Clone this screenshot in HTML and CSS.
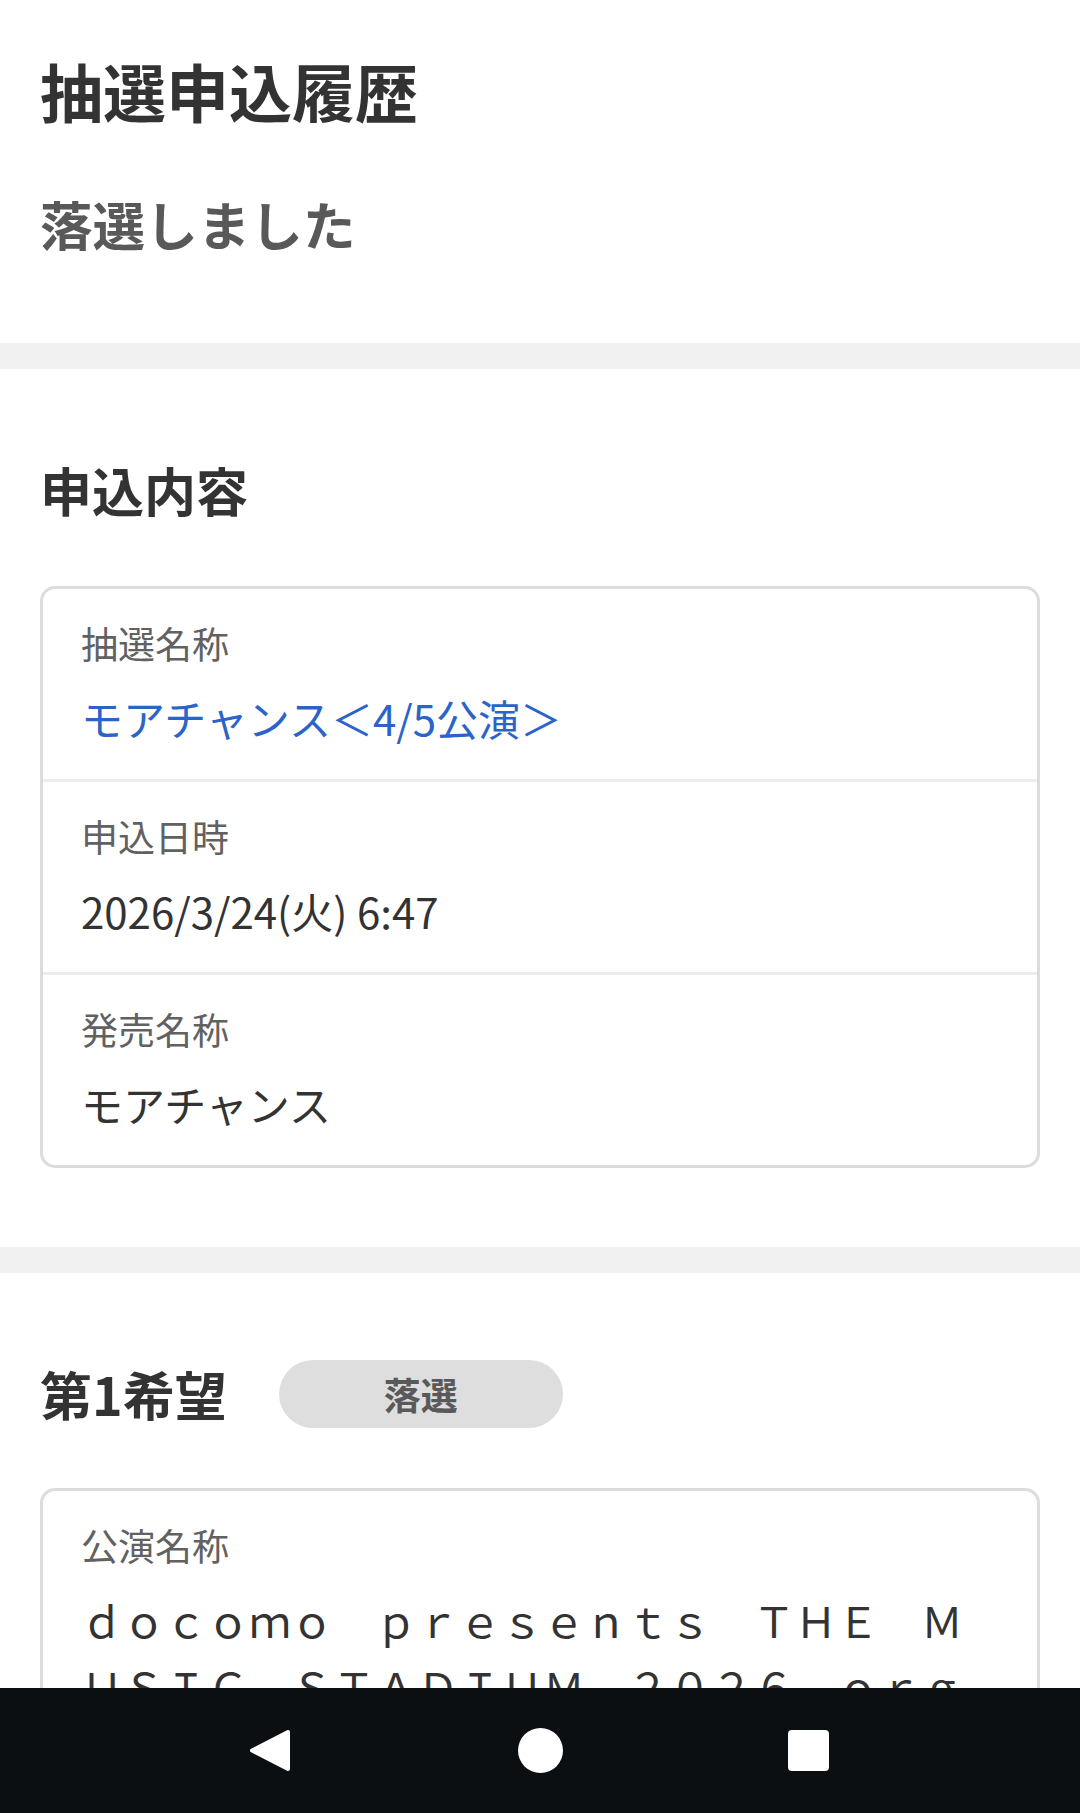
FILE: index.html
```html
<!DOCTYPE html>
<html lang="ja">
<head>
<meta charset="utf-8">
<title>抽選申込履歴</title>
<link rel="stylesheet" href="styles.css">
</head>
<body>
<main class="page">
  <section class="hero">
    <h1 class="title">抽選申込履歴</h1>
    <p class="result">落選しました</p>
  </section>
  <div class="band"></div>
  <section class="block block-apply">
    <h2 class="heading">申込内容</h2>
    <dl class="card">
      <div class="row">
        <dt class="label">抽選名称</dt>
        <dd class="value link">モアチャンス＜4/5公演＞</dd>
      </div>
      <div class="row">
        <dt class="label">申込日時</dt>
        <dd class="value">2026/3/24(火) 6:47</dd>
      </div>
      <div class="row">
        <dt class="label">発売名称</dt>
        <dd class="value">モアチャンス</dd>
      </div>
    </dl>
  </section>
  <div class="band"></div>
  <section class="block block-choice">
    <div class="choice-head">
      <h2 class="heading">第1希望</h2>
      <span class="pill">落選</span>
    </div>
    <dl class="card">
      <div class="row">
        <dt class="label">公演名称</dt>
        <dd class="value">ｄｏｃｏｍｏ　ｐｒｅｓｅｎｔｓ　ＴＨＥ　ＭＵＳＩＣ　ＳＴＡＤＩＵＭ　２０２６　ｏｒｇ</dd>
      </div>
    </dl>
  </section>
</main>
<nav class="sysnav">
  <span class="navbtn">
    <svg width="45" height="45" viewBox="0 0 45 45"><polygon points="2,22.5 38,4 38,41" fill="#fff" stroke="#fff" stroke-width="4" stroke-linejoin="round"/></svg>
  </span>
  <span class="navbtn">
    <svg width="45" height="45" viewBox="0 0 45 45"><circle cx="22.5" cy="22.5" r="22.5" fill="#fff"/></svg>
  </span>
  <span class="navbtn">
    <svg width="45" height="45" viewBox="0 0 45 45"><rect x="2" y="2" width="41" height="41" rx="4" fill="#fff"/></svg>
  </span>
</nav>
</body>
</html>
```

FILE: styles.css
```css
html, body {
  margin: 0;
  padding: 0;
  background: #ffffff;
}

body {
  font-family: "Noto Sans CJK JP", "Noto Sans", sans-serif;
  color: #333333;
}

.page {
  display: flex;
  flex-direction: column;
}

.hero {
  padding: 46px 40px 82px;
}

.title {
  margin: 0;
  font-size: 63px;
  line-height: 88px;
  font-weight: 700;
  color: #333333;
}

.result {
  margin: 51px 0 0;
  font-size: 52.6px;
  line-height: 76px;
  font-weight: 700;
  color: #595959;
}

.band {
  height: 26px;
  background: #f0f0f0;
}

.block {
  padding: 84px 40px 79px;
}

.heading {
  margin: 0;
  font-size: 52px;
  line-height: 74px;
  font-weight: 700;
  color: #333333;
}

.block-apply .heading {
  margin-bottom: 59px;
}

.choice-head {
  display: flex;
  align-items: center;
  gap: 52px;
  margin-bottom: 57px;
}

.pill {
  display: flex;
  align-items: center;
  justify-content: center;
  width: 284px;
  height: 68px;
  border-radius: 34px;
  background: #dedede;
  color: #595959;
  font-size: 37px;
  font-weight: 700;
  line-height: 1;
}

.card {
  margin: 0;
  border: 3px solid #dcdcdc;
  border-radius: 15px;
  display: flex;
  flex-direction: column;
}

.row {
  padding: 26px 38px 28px;
}

.row + .row {
  border-top: 3px solid #ececec;
}

.label {
  margin: 0;
  font-size: 37px;
  line-height: 56px;
  color: #616161;
}

.value {
  margin: 14px 0 0;
  font-size: 42px;
  line-height: 66px;
  color: #333333;
}

.link {
  color: #2b64c8;
}

.sysnav {
  position: fixed;
  left: 0;
  right: 0;
  bottom: 0;
  height: 125px;
  background: #0c0f12;
  display: flex;
  align-items: center;
  justify-content: center;
  gap: 223px;
}

.navbtn {
  display: flex;
  width: 45px;
  height: 45px;
}
```
